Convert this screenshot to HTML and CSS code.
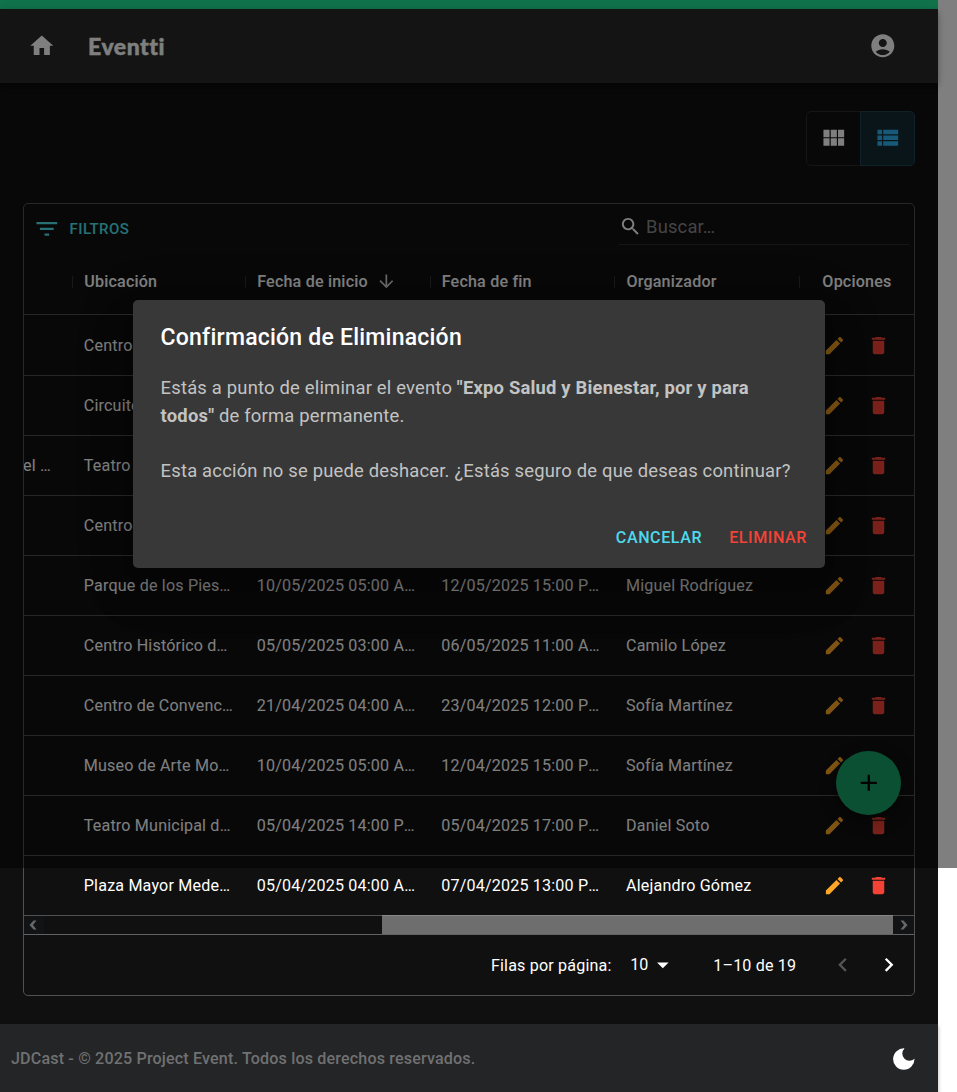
FILE: index.html
```html
<!DOCTYPE html>
<html lang="es">
<head>
<meta charset="utf-8">
<title>Eventti</title>
<link rel="stylesheet" href="styles.css">
</head>
<body>
<svg class="defs" aria-hidden="true">
  <symbol id="edit" viewBox="0 0 24 24"><path d="M3 17.25V21h3.75L17.81 9.94l-3.75-3.75L3 17.25zM20.71 7.04c.39-.39.39-1.02 0-1.41l-2.34-2.34a.996.996 0 0 0-1.41 0l-1.83 1.83 3.75 3.75 1.83-1.83z"/></symbol>
  <symbol id="delete" viewBox="0 0 24 24"><path d="M6 19c0 1.1.9 2 2 2h8c1.1 0 2-.9 2-2V7H6v12zM19 4h-3.500l-1-1h-5l-1 1H5v2h14V4z"/></symbol>
</svg>
<div class="page">
  <div class="strip"></div>
  <header class="appbar">
    <svg class="icon home" viewBox="0 0 24 24"><path d="M10 20v-6h4v6h5v-8h3L12 3 2 12h3v8z"/></svg>
    <span class="brand">Eventti</span>
    <svg class="icon account" viewBox="0 0 24 24"><path d="M12 2C6.480 2 2 6.480 2 12s4.480 10 10 10 10-4.480 10-10S17.520 2 12 2zm0 4c1.930 0 3.500 1.570 3.500 3.500S13.930 13 12 13s-3.500-1.570-3.500-3.500S10.070 6 12 6zm0 14c-2.030 0-4.430-.82-6.140-2.880C7.550 15.800 9.680 15 12 15s4.450.8 6.140 2.120C16.430 19.180 14.030 20 12 20z"/></svg>
  </header>
  <main class="content">
    <div class="toggles">
      <button class="toggle"><svg class="icon" viewBox="0 0 24 24"><path d="M14.670 5v6.500H9.330V5h5.340zm1 6.500H21V5h-5.330v6.500zm-1 7.500v-6.500H9.330V19h5.340zm1-6.500V19H21v-6.500h-5.330zm-7.340 0H3V19h5.330v-6.500zm0-1V5H3v6.500h5.330z"/></svg></button>
      <button class="toggle selected"><svg class="icon" viewBox="0 0 24 24"><path d="M3 14h4v-4H3v4zm0 5h4v-4H3v4zM3 9h4V5H3v4zm5 5h13v-4H8v4zm0 5h13v-4H8v4zM8 5v4h13V5H8z"/></svg></button>
    </div>
    <section class="grid">
      <div class="toolbar">
        <button class="filters"><svg class="icon" viewBox="0 0 24 24"><path d="M10 18h4v-2h-4v2zM3 6v2h18V6H3zm3 7h12v-2H6v2z"/></svg>FILTROS</button>
        <div class="search"><svg viewBox="0 0 24 24"><path d="M15.500 14h-.79l-.28-.27C15.410 12.590 16 11.110 16 9.500 16 5.910 13.090 3 9.500 3S3 5.910 3 9.500 5.910 16 9.500 16c1.610 0 3.090-.59 4.230-1.570l.27.28v.79l5 4.990L20.490 19l-4.990-5zm-6 0C7.010 14 5 11.990 5 9.500S7.010 5 9.500 5 14 7.010 14 9.500 11.990 14 9.500 14z"/></svg><span>Buscar…</span></div>
      </div>
      <div class="row head">
        <div></div><div>Ubicación</div>
        <div>Fecha de inicio<svg class="sort" viewBox="0 0 24 24"><path d="M20 12l-1.410-1.410L13 16.170V4h-2v12.170l-5.580-5.590L4 12l8 8 8-8z"/></svg></div>
        <div>Fecha de fin</div><div>Organizador</div><div class="center">Opciones</div>
      </div>
      <div class="row"><div></div><div>Centro</div><div></div><div></div><div></div><div class="actions"><svg><use href="#edit"/></svg><svg><use href="#delete"/></svg></div></div>
      <div class="row"><div></div><div>Circuito</div><div></div><div></div><div></div><div class="actions"><svg><use href="#edit"/></svg><svg><use href="#delete"/></svg></div></div>
      <div class="row"><div class="rest">el …</div><div>Teatro</div><div></div><div></div><div></div><div class="actions"><svg><use href="#edit"/></svg><svg><use href="#delete"/></svg></div></div>
      <div class="row"><div></div><div>Centro</div><div></div><div></div><div></div><div class="actions"><svg><use href="#edit"/></svg><svg><use href="#delete"/></svg></div></div>
      <div class="row"><div></div><div>Parque de los Pies…</div><div>10/05/2025 05:00 A<i>…</i></div><div>12/05/2025 15:00 P<i>…</i></div><div>Miguel Rodríguez</div><div class="actions"><svg><use href="#edit"/></svg><svg><use href="#delete"/></svg></div></div>
      <div class="row"><div></div><div>Centro Histórico d…</div><div>05/05/2025 03:00 A<i>…</i></div><div>06/05/2025 11:00 A<i>…</i></div><div>Camilo López</div><div class="actions"><svg><use href="#edit"/></svg><svg><use href="#delete"/></svg></div></div>
      <div class="row"><div></div><div>Centro de Convenc…</div><div>21/04/2025 04:00 A<i>…</i></div><div>23/04/2025 12:00 P<i>…</i></div><div>Sofía Martínez</div><div class="actions"><svg><use href="#edit"/></svg><svg><use href="#delete"/></svg></div></div>
      <div class="row"><div></div><div>Museo de Arte Mo…</div><div>10/04/2025 05:00 A<i>…</i></div><div>12/04/2025 15:00 P<i>…</i></div><div>Sofía Martínez</div><div class="actions"><svg><use href="#edit"/></svg><svg><use href="#delete"/></svg></div></div>
      <div class="row"><div></div><div>Teatro Municipal d…</div><div>05/04/2025 14:00 P<i>…</i></div><div>05/04/2025 17:00 P<i>…</i></div><div>Daniel Soto</div><div class="actions"><svg><use href="#edit"/></svg><svg><use href="#delete"/></svg></div></div>
      <div class="row"><div></div><div>Plaza Mayor Mede…</div><div>05/04/2025 04:00 A<i>…</i></div><div>07/04/2025 13:00 P<i>…</i></div><div>Alejandro Gómez</div><div class="actions"><svg><use href="#edit"/></svg><svg><use href="#delete"/></svg></div></div>
      <div class="scrollbar">
        <div class="arrow"><svg viewBox="0 0 8 10"><path d="M7.500.5H4.500L.5 5l4 4.500h3L4 5z"/></svg></div>
        <div class="track"><div class="thumb"></div></div>
        <div class="arrow"><svg viewBox="0 0 8 10"><path d="M.5.5h3l4 4.500-4 4.500h-3L4 5z"/></svg></div>
      </div>
      <div class="pager">
        <span class="label">Filas por página:</span>
        <span class="size">10<svg class="icon" viewBox="0 0 24 24"><path d="M7 10l5 5 5-5z"/></svg></span>
        <span class="range">1–10 de 19</span>
        <svg class="icon prev" viewBox="0 0 24 24"><path d="M15.410 16.590L10.830 12l4.580-4.590L14 6l-6 6 6 6z"/></svg>
        <svg class="icon" viewBox="0 0 24 24"><path d="M8.590 16.590L13.170 12 8.590 7.410 10 6l6 6-6 6z"/></svg>
      </div>
    </section>
  </main>
  <footer class="footer">
    <span>JDCast - © 2025 Project Event. Todos los derechos reservados.</span>
    <svg class="moon" viewBox="0 0 22 22"><path d="M11.500.4A6.900 6.900 0 0 0 21.500 10.800A10.700 10.700 0 1 1 11.500.4z"/></svg>
  </footer>
</div>
<button class="fab"><svg class="icon" viewBox="0 0 24 24"><path d="M19 13h-6v6h-2v-6H5v-2h6V5h2v6h6v2z"/></svg></button>
<div class="backdrop">
  <div class="dialog" role="dialog">
    <h2>Confirmación de Eliminación</h2>
    <p>Estás a punto de eliminar el evento <b>"Expo Salud y Bienestar, por y para todos"</b> de forma permanente.<br><br>Esta acción no se puede deshacer. ¿Estás seguro de que deseas continuar?</p>
    <div class="dialog-actions"><button>CANCELAR</button><button class="danger">ELIMINAR</button></div>
  </div>
</div>
</body>
</html>
```
FILE: styles.css
```css
* { box-sizing: border-box; }
html { background: #fff; }
body { margin: 0; height: 1092px; overflow: hidden; position: relative; font-family: Roboto, "Liberation Sans", sans-serif; color: #fff; font-size: 16.1px; letter-spacing: .175px; }
button { font: inherit; letter-spacing: inherit; background: none; border: 0; padding: 0; color: inherit; }
svg { display: block; flex: none; fill: currentColor; }
.defs { display: none; }
.icon { width: 27.6px; height: 27.6px; }
.page { width: 938px; height: 1092px; background: #101010; display: flex; flex-direction: column; }
.strip { height: 9px; background: #20e696; }
.appbar { height: 74px; background: #282828; display: flex; align-items: center; padding: 0 41px 0 28px; box-shadow: 0 2px 5px -1px rgba(0,0,0,.2), 0 5px 6px rgba(0,0,0,.14), 0 1px 11px rgba(0,0,0,.12); }
.brand { margin-left: 32.5px; font: 900 23px/30px Lato, sans-serif; letter-spacing: .5px; -webkit-text-stroke: .4px currentColor; }
.account { margin-left: auto; }
.content { flex: 1; padding: 28px 23px 0; }
.toggles { display: flex; justify-content: flex-end; margin-bottom: 37px; }
.toggle { width: 55px; height: 55px; display: grid; place-items: center; padding-bottom: 1px; border: 1px solid #2b2b2b; border-radius: 5px 0 0 5px; }
.toggle.selected { margin-left: -1px; color: #2cb2f2; background: #142a35; border-color: #23434f; border-radius: 0 5px 5px 0; }
.grid { border: 1px solid #515151; border-radius: 5px; height: 793px; }
.toolbar { height: 45px; display: flex; justify-content: space-between; padding: 0 5px 4px 9px; }
.filters { display: flex; align-items: center; gap: 9px; color: #4de0ec; font-weight: 500; font-size: 15px; letter-spacing: .4px; padding-top: 9px; }
.search { width: 290px; display: flex; align-items: center; gap: 4px; border-bottom: 1px solid #2d2d2d; font-size: 18.4px; letter-spacing: .17px; padding-top: 5px; }
.search svg { width: 23px; height: 23px; }
.search span { color: #8a8a8a; }
.row { display: grid; grid-template-columns: 48.3px 173px 184.5px 184.7px 184.5px 1fr; height: 60px; border-bottom: 1px solid #515151; align-items: center; }
.row > div { padding: 0 11.5px; white-space: nowrap; overflow: hidden; }
.row > .rest { padding: 0; text-indent: -1px; }
/* own box for the ellipsis, so that it is not kerned into the capital before it */
.row i { display: inline-block; font-style: normal; }
.row > .actions { display: flex; gap: 21px; padding: 0 0 0 24px; }
.actions svg { width: 23px; height: 23px; color: #ffa726; }
.actions svg + svg { color: #f44336; }
.head { height: 66px; font-weight: 500; letter-spacing: .19px; }
.head + .row { height: 61px; }
.head > div { display: flex; align-items: center; gap: 8px; height: 12px; overflow: visible; }
.head > div + div { border-left: 1px solid #303030; margin-left: -.3px; padding-left: 11.2px; }
.head > .center { justify-content: center; padding-right: 11px; }
.sort { width: 20.7px; height: 20.7px; color: #d0d0d0; }
.scrollbar { display: flex; height: 19px; border-bottom: 1px solid #626262; }
.arrow { width: 20px; display: grid; place-items: center; color: #66686a; background: #121315; padding-right: 2px; }
.arrow:last-child { width: 21px; padding: 0 0 0 1px; }
.arrow svg { width: 8px; height: 10px; }
.track { flex: 1; display: flex; justify-content: flex-end; }
.thumb { width: 511px; margin-top: -1px; background: #6e6e6e; border-top: 1px solid #878787; }
.pager { height: 60px; display: flex; align-items: center; justify-content: flex-end; padding-right: 11px; }
.label, .range { padding-top: 1px; }
.size { display: flex; align-items: center; margin: -1px 0 0 18.5px; }
.range { margin: 0 32.5px 0 37px; }
.prev { color: #555; margin-right: 19px; }
.footer { height: 68px; background: #242526; display: flex; align-items: center; justify-content: space-between; padding: 0 23px 0 11px; color: #707172; font-weight: 500; letter-spacing: .155px; box-shadow: 0 2px 4px rgba(0,0,0,.3); }
.moon { width: 22px; height: 22px; margin-top: 1px; color: #fff; }
.fab { position: absolute; left: 836px; top: 751px; width: 65px; height: 64px; border-radius: 50%; background: #16a066; color: #000; display: grid; place-items: center; box-shadow: 0 3px 6px rgba(0,0,0,.3), 0 6px 18px rgba(0,0,0,.25); }
.backdrop { position: absolute; left: 0; top: 0; width: 957px; height: 868px; background: rgba(0,0,0,.5); overflow: hidden; display: grid; place-items: center; }
.dialog { width: 692px; height: 268px; margin-right: -1px; background: #383838; border-radius: 5px; padding: 19px 9px 10px 27.6px; box-shadow: 0 13px 17px -8px rgba(0,0,0,.2), 0 28px 44px 3px rgba(0,0,0,.14), 0 10px 53px 9px rgba(0,0,0,.12); display: flex; flex-direction: column; }
.dialog h2 { margin: 0 0 18px; font-size: 23px; line-height: 37px; font-weight: 500; letter-spacing: .22px; }
.dialog p { margin: 0; width: 640px; color: #c3c3c3; font-size: 18.4px; line-height: 27.6px; letter-spacing: .2px; }
.dialog b { font-weight: 700; }
.dialog-actions { margin-top: auto; display: flex; justify-content: flex-end; gap: 27px; height: 42px; padding-right: 9px; color: #4dd9ec; font-weight: 500; letter-spacing: .56px; }
.danger { color: #f44336; }
```
